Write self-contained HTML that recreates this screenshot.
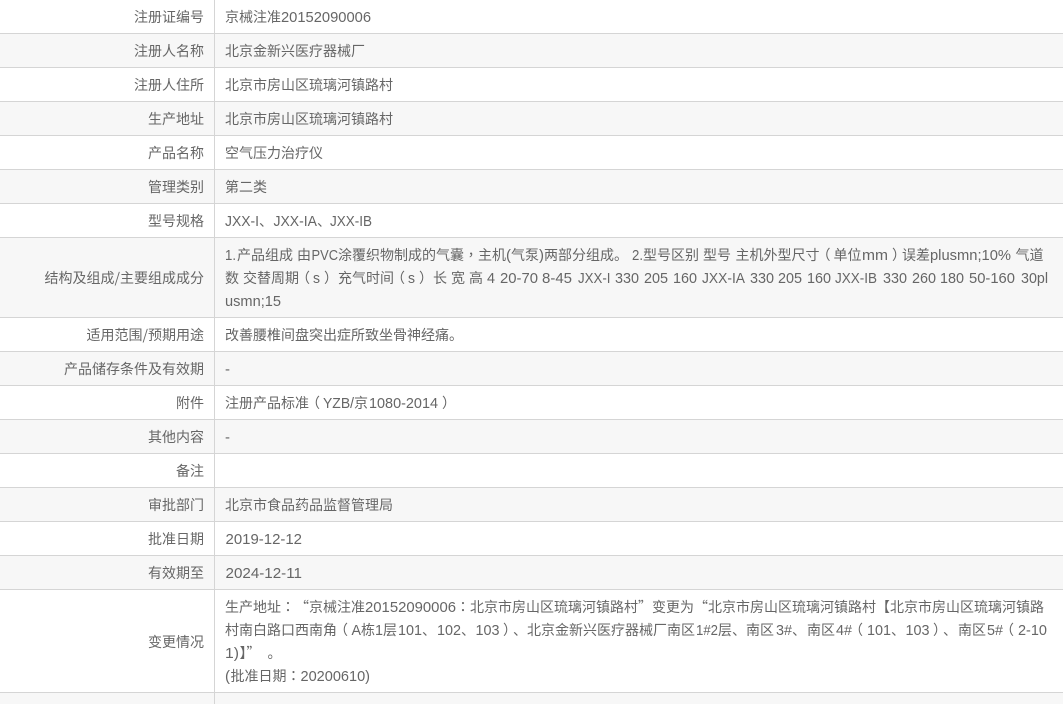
<!DOCTYPE html>
<html lang="zh-CN">
<head>
<meta charset="utf-8">
<style>
html,body{margin:0;padding:0;width:1063px;height:704px;overflow:hidden;background:#fff}
svg{display:block;position:absolute;left:0;top:0}
text{font-family:"Noto Sans CJK SC",sans-serif;font-size:14px;fill:#666;white-space:pre}
.e{text-anchor:end}
.l{font-family:"Liberation Sans",sans-serif;font-size:15px}
.t{font-family:"Noto Sans CJK TC",sans-serif}
</style>
</head>
<body>
<svg width="1063" height="704" viewBox="0 0 1063 704" xmlns="http://www.w3.org/2000/svg">
<g fill="#f7f7f7">
<rect x="0" y="34" width="1063" height="33"/>
<rect x="0" y="102" width="1063" height="33"/>
<rect x="0" y="170" width="1063" height="33"/>
<rect x="0" y="238" width="1063" height="79"/>
<rect x="0" y="352" width="1063" height="33"/>
<rect x="0" y="420" width="1063" height="33"/>
<rect x="0" y="488" width="1063" height="33"/>
<rect x="0" y="556" width="1063" height="33"/>
<rect x="0" y="693" width="1063" height="11"/>
</g>
<g fill="#d5d5d5">
<rect x="0" y="33" width="1063" height="1"/>
<rect x="0" y="67" width="1063" height="1"/>
<rect x="0" y="101" width="1063" height="1"/>
<rect x="0" y="135" width="1063" height="1"/>
<rect x="0" y="169" width="1063" height="1"/>
<rect x="0" y="203" width="1063" height="1"/>
<rect x="0" y="237" width="1063" height="1"/>
<rect x="0" y="317" width="1063" height="1"/>
<rect x="0" y="351" width="1063" height="1"/>
<rect x="0" y="385" width="1063" height="1"/>
<rect x="0" y="419" width="1063" height="1"/>
<rect x="0" y="453" width="1063" height="1"/>
<rect x="0" y="487" width="1063" height="1"/>
<rect x="0" y="521" width="1063" height="1"/>
<rect x="0" y="555" width="1063" height="1"/>
<rect x="0" y="589" width="1063" height="1"/>
<rect x="0" y="692" width="1063" height="1"/>
<rect x="214" y="0" width="1" height="704"/>
</g>

<text class="e" x="204" y="22">注册证编号</text>
<text class="e" x="204" y="56">注册人名称</text>
<text class="e" x="204" y="90">注册人住所</text>
<text class="e" x="204" y="124">生产地址</text>
<text class="e" x="204" y="158">产品名称</text>
<text class="e" x="204" y="192">管理类别</text>
<text class="e" x="204" y="226">型号规格</text>
<text class="e" x="204" y="283">结构及组成/主要组成成分</text>
<text class="e" x="204" y="340">适用范围/预期用途</text>
<text class="e" x="204" y="374">产品储存条件及有效期</text>
<text class="e" x="204" y="408">附件</text>
<text class="e" x="204" y="442">其他内容</text>
<text class="e" x="204" y="476">备注</text>
<text class="e" x="204" y="510">审批部门</text>
<text class="e" x="204" y="544">批准日期</text>
<text class="e" x="204" y="578">有效期至</text>
<text class="e" x="204" y="647">变更情况</text>

<text x="225" y="22">京械注准</text><text class="l" x="281" y="22" textLength="90" lengthAdjust="spacingAndGlyphs">20152090006</text>
<text x="225" y="56">北京金新兴医疗器械厂</text>
<text x="225" y="90">北京市房山区琉璃河镇路村</text>
<text x="225" y="124">北京市房山区琉璃河镇路村</text>
<text x="225" y="158">空气压力治疗仪</text>
<text x="225" y="192">第二类</text>
<text class="l" x="225" y="226" textLength="34" lengthAdjust="spacingAndGlyphs">JXX-I</text><text x="259" y="226">、</text><text class="l" x="273.5" y="226" textLength="43.5" lengthAdjust="spacingAndGlyphs">JXX-IA</text><text x="317" y="226">、</text><text class="l" x="330" y="226" textLength="42" lengthAdjust="spacingAndGlyphs">JXX-IB</text>

<!-- 结构及组成 line 1 -->
<text class="l" x="225" y="260" textLength="11" lengthAdjust="spacingAndGlyphs">1.</text>
<text x="237" y="260">产品组成</text>
<text x="297" y="260">由</text>
<text class="l" x="311.5" y="260" textLength="26.5" lengthAdjust="spacingAndGlyphs">PVC</text>
<text x="338" y="260">涂覆织物制成的气囊</text>
<text class="t" x="464" y="260">，</text>
<text x="478" y="260">主机</text>
<text class="l" x="506" y="260" textLength="5" lengthAdjust="spacingAndGlyphs">(</text>
<text x="511" y="260">气泵</text>
<text class="l" x="539" y="260" textLength="5" lengthAdjust="spacingAndGlyphs">)</text>
<text x="544" y="260">两部分组成。</text>
<text class="l" x="632" y="260" textLength="11" lengthAdjust="spacingAndGlyphs">2.</text>
<text x="643" y="260">型号区别</text>
<text x="703" y="260">型号</text>
<text x="735.5" y="260">主机外型尺寸</text>
<text class="t" x="816.5" y="260">（</text>
<text x="833.5" y="260">单位</text>
<text class="l" x="862" y="260" textLength="26" lengthAdjust="spacingAndGlyphs">mm</text>
<text class="t" x="892" y="260">）</text>
<text x="902" y="260">误差</text>
<text class="l" x="930" y="260" textLength="81" lengthAdjust="spacingAndGlyphs">plusmn;10%</text>
<text x="1015.5" y="260">气道</text>

<!-- line 2 -->
<text x="225" y="283">数</text>
<text x="243" y="283">交替周期</text>
<text class="t" x="296" y="283">（</text>
<text class="l" x="313" y="283" textLength="7" lengthAdjust="spacingAndGlyphs">s</text>
<text class="t" x="324" y="283">）</text>
<text x="338" y="283">充气时间</text>
<text class="t" x="391" y="283">（</text>
<text class="l" x="408" y="283" textLength="7" lengthAdjust="spacingAndGlyphs">s</text>
<text class="t" x="419" y="283">）</text>
<text x="433" y="283">长</text>
<text x="451" y="283">宽</text>
<text x="469" y="283">高</text>
<text class="l" x="487" y="283" textLength="8" lengthAdjust="spacingAndGlyphs">4</text>
<text class="l" x="500" y="283" textLength="38" lengthAdjust="spacingAndGlyphs">20-70</text>
<text class="l" x="542" y="283" textLength="30" lengthAdjust="spacingAndGlyphs">8-45</text>
<text class="l" x="578" y="283" textLength="32.5" lengthAdjust="spacingAndGlyphs">JXX-I</text>
<text class="l" x="615" y="283" textLength="24" lengthAdjust="spacingAndGlyphs">330</text>
<text class="l" x="644" y="283" textLength="24" lengthAdjust="spacingAndGlyphs">205</text>
<text class="l" x="673" y="283" textLength="24" lengthAdjust="spacingAndGlyphs">160</text>
<text class="l" x="702" y="283" textLength="43" lengthAdjust="spacingAndGlyphs">JXX-IA</text>
<text class="l" x="750" y="283" textLength="24" lengthAdjust="spacingAndGlyphs">330</text>
<text class="l" x="778" y="283" textLength="24" lengthAdjust="spacingAndGlyphs">205</text>
<text class="l" x="807" y="283" textLength="24" lengthAdjust="spacingAndGlyphs">160</text>
<text class="l" x="835" y="283" textLength="42" lengthAdjust="spacingAndGlyphs">JXX-IB</text>
<text class="l" x="883" y="283" textLength="24" lengthAdjust="spacingAndGlyphs">330</text>
<text class="l" x="912" y="283" textLength="24" lengthAdjust="spacingAndGlyphs">260</text>
<text class="l" x="940" y="283" textLength="24" lengthAdjust="spacingAndGlyphs">180</text>
<text class="l" x="969" y="283" textLength="46" lengthAdjust="spacingAndGlyphs">50-160</text>
<text class="l" x="1021" y="283" textLength="27" lengthAdjust="spacingAndGlyphs">30pl</text>
<!-- line 3 -->
<text class="l" x="225" y="306" textLength="56" lengthAdjust="spacingAndGlyphs">usmn;15</text>

<text x="225" y="340">改善腰椎间盘突出症所致坐骨神经痛。</text>
<text class="l" x="225" y="374" textLength="5" lengthAdjust="spacingAndGlyphs">-</text>
<text x="225" y="408">注册产品标准</text><text class="t" x="306" y="408">（</text><text class="l" x="323" y="408" textLength="31" lengthAdjust="spacingAndGlyphs">YZB/</text><text x="354" y="408">京</text><text class="l" x="369" y="408" textLength="69" lengthAdjust="spacingAndGlyphs">1080-2014</text><text class="t" x="442" y="408">）</text>
<text class="l" x="225" y="442" textLength="5" lengthAdjust="spacingAndGlyphs">-</text>
<text x="225" y="510">北京市食品药品监督管理局</text>
<text class="l" x="225.5" y="544" textLength="76.5" lengthAdjust="spacingAndGlyphs">2019-12-12</text>
<text class="l" x="225.5" y="578" textLength="76.5" lengthAdjust="spacingAndGlyphs">2024-12-11</text>

<!-- 变更情况 line 1 -->
<text x="225" y="612">生产地址</text>
<text class="t" x="281" y="612">：</text>
<text x="295" y="612">“京械注准</text>
<text class="l" x="365" y="612" textLength="91" lengthAdjust="spacingAndGlyphs">20152090006</text>
<text class="t" x="456" y="612">：</text>
<text x="470" y="612">北京市房山区琉璃河镇路村”变更为“北京市房山区琉璃河镇路村【北京市房山区琉璃河镇路</text>
<!-- line 2 -->
<text x="225" y="635">村南白路口西南角</text>
<text class="t" x="334" y="635">（</text>
<text class="l" x="351.5" y="635" textLength="9.5" lengthAdjust="spacingAndGlyphs">A</text>
<text x="361" y="635">栋</text>
<text class="l" x="375" y="635" textLength="8" lengthAdjust="spacingAndGlyphs">1</text>
<text x="383" y="635">层</text>
<text class="l" x="398" y="635" textLength="24" lengthAdjust="spacingAndGlyphs">101</text>
<text x="422" y="635">、</text>
<text class="l" x="437" y="635" textLength="24" lengthAdjust="spacingAndGlyphs">102</text>
<text x="461" y="635">、</text>
<text class="l" x="475.5" y="635" textLength="24" lengthAdjust="spacingAndGlyphs">103</text>
<text class="t" x="503" y="635">）</text>
<text x="513" y="635">、</text>
<text x="527" y="635">北京金新兴医疗器械厂南区</text>
<text class="l" x="696" y="635" textLength="22" lengthAdjust="spacingAndGlyphs">1#2</text>
<text x="718" y="635">层、南区</text>
<text class="l" x="776" y="635" textLength="16" lengthAdjust="spacingAndGlyphs">3#</text>
<text x="792" y="635">、</text>
<text x="807" y="635">南区</text>
<text class="l" x="836" y="635" textLength="16" lengthAdjust="spacingAndGlyphs">4#</text>
<text class="t" x="849" y="635">（</text>
<text class="l" x="867" y="635" textLength="24" lengthAdjust="spacingAndGlyphs">101</text>
<text x="891" y="635">、</text>
<text class="l" x="905.5" y="635" textLength="24" lengthAdjust="spacingAndGlyphs">103</text>
<text class="t" x="933" y="635">）</text>
<text x="943" y="635">、</text>
<text x="958" y="635">南区</text>
<text class="l" x="987" y="635" textLength="16" lengthAdjust="spacingAndGlyphs">5#</text>
<text class="t" x="1000" y="635">（</text>
<text class="l" x="1018" y="635" textLength="29" lengthAdjust="spacingAndGlyphs">2-10</text>
<!-- line 3 -->
<text class="l" x="225" y="658" textLength="14" lengthAdjust="spacingAndGlyphs">1)</text>
<text x="239.5" y="658">】”</text>
<text x="267.5" y="658">。</text>
<!-- line 4 -->
<text class="l" x="225" y="681" textLength="5" lengthAdjust="spacingAndGlyphs">(</text>
<text x="230.5" y="681">批准日期</text>
<text class="t" x="286.5" y="681">：</text>
<text class="l" x="300.5" y="681" textLength="69.5" lengthAdjust="spacingAndGlyphs">20200610)</text>
</svg>
</body>
</html>
